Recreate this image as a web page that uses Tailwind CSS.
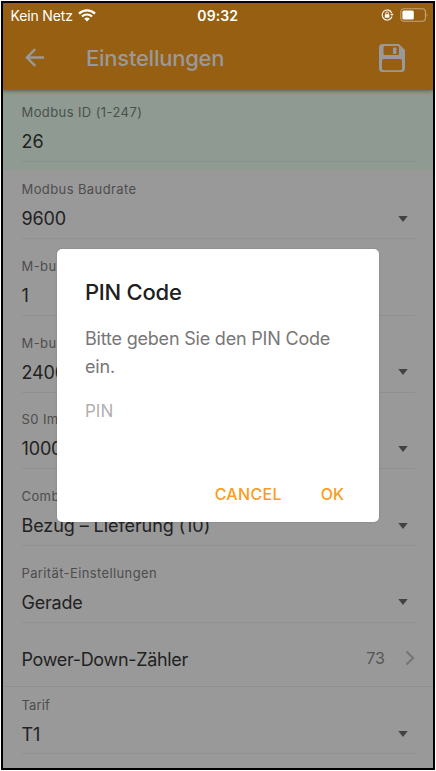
<!DOCTYPE html>
<html lang="de">
<head>
<meta charset="utf-8">
<title>Einstellungen</title>
<script src="https://cdn.jsdelivr.net/npm/@tailwindcss/browser@4"></script>
</head>
<body class="bg-white font-['Inter','Liberation_Sans',sans-serif]">
<div class="relative w-[436px] h-[771px] overflow-hidden bg-white p-px">
<main class="w-[434px] h-[769px] border-2 border-black bg-[#999] overflow-hidden flex flex-col text-[#222]">

  <header class="relative z-10 h-[87px] shrink-0 bg-[#965f12] shadow-[0_1px_4px_rgba(0,0,0,0.4)]">
    <div class="grid grid-cols-3 items-center h-[24px] pl-[7.5px] pr-[5px] text-[14px] text-white">
      <div class="flex items-center gap-[5px]"><span class="tracking-[-0.15px] whitespace-nowrap">Kein Netz</span>
        <svg width="18" height="13" viewBox="0 0 18 13" fill="none" stroke="#fff"><path d="M1 4.6a11.5 11.5 0 0 1 16 0" stroke-width="2.3"/><path d="M3.9 7.6a7.3 7.3 0 0 1 10.2 0" stroke-width="2.1"/><path d="M9 12.5 6.2 9.8a4 4 0 0 1 5.6 0Z" fill="#fff" stroke="none"/></svg>
      </div>
      <div class="text-center font-semibold tracking-[0.1px] pr-[3px]">09:32</div>
      <div class="flex items-center justify-end gap-[6px]">
        <svg width="13" height="12" viewBox="0 0 13 12" fill="none" stroke="#fff"><path d="M10.8 4A5 5 0 1 0 11 7.5" stroke-width="1.1"/><path d="M9.2 4.8h3.4L11 7Z" fill="#fff" stroke="none"/><rect x="3.8" y="5.3" width="4.6" height="3.5" rx=".5" fill="#fff" stroke="none"/><path d="M4.8 5.5V4.2a1.3 1.3 0 0 1 2.6 0v1.3" stroke-width=".9"/></svg>
        <svg class="-mr-px -mt-px" width="29" height="14" viewBox="0 0 29 14"><rect x=".8" y=".8" width="24.6" height="12.400" rx="3.200" fill="none" stroke="#c6a577" stroke-width="1.1"/><rect x="2.400" y="2.500" width="11.400" height="9" rx="1.500" fill="#fff"/><path d="M26.700 5q1.800 2 0 4Z" fill="#c6a577"/></svg>
      </div>
    </div>
    <div class="flex items-center h-[62px] pl-[22px] pr-[28px] text-[#999]">
      <svg width="20" height="20" viewBox="0 0 20 20" fill="none" stroke="currentColor" stroke-width="2.4"><path d="M19 9.500H2M10.200 1.200 1.900 9.500l8.300 8.300"/></svg>
      <h1 class="ml-[41px] text-[22px] font-medium tracking-[-0.25px] leading-[30px]">Einstellungen</h1>
      <svg class="ml-auto" width="26" height="28" viewBox="0 0 26 28"><path fill="currentColor" fill-rule="evenodd" d="M3.500 0H20l6 6v18.500a3.500 3.500 0 0 1-3.500 3.500h-19A3.500 3.500 0 0 1 0 24.500V3.500A3.500 3.500 0 0 1 3.500 0ZM6 2Q4.500 2 4.500 3.500V9.500Q4.500 11 6 11H18.500Q20 11 20 9.500V3.500Q20 2 18.500 2ZM5 15Q3 15 3 17V24.500Q3 26.300 5 26.300H21Q23 26.300 23 24.500V17Q23 15 21 15Z"/><rect x="14" y="3.500" width="3.400" height="6.500" rx=".6" fill="currentColor"/></svg>
    </div>
  </header>

  <section class="h-[80px] shrink-0 bg-[#8f9b92] pl-[18.5px] pr-[18px] pt-[12px]">
    <div class="h-[20px] leading-[20px] text-[13px] tracking-[0.4px] text-[#4b504c]">Modbus ID (1-247)</div>
    <div class="h-[40px] leading-[39px] text-[18px] border-b border-[#879189]">26</div>
  </section>

  <section class="h-[76.75px] shrink-0 pl-[18.5px] pr-[18px] pt-[9px]">
    <div class="h-[20px] leading-[20px] text-[13px] tracking-[0.4px] text-[#4d4d4d]">Modbus Baudrate</div>
    <div class="flex items-center justify-between h-[40px] text-[18px] tracking-[-0.15px] border-b border-[#909090] pr-[7px]"><span>9600</span><svg width="10" height="6" viewBox="0 0 10 6" fill="#424242"><path d="M.3 0h9.400L5 6Z"/></svg></div>
  </section>
  <section class="h-[76.75px] shrink-0 pl-[18.5px] pr-[18px] pt-[9px]">
    <div class="h-[20px] leading-[20px] text-[13px] tracking-[0.45px] text-[#4d4d4d]">M-bus ID</div>
    <div class="flex items-center h-[40px] text-[18px] border-b border-[#909090]">1</div>
  </section>
  <section class="h-[76.75px] shrink-0 pl-[18.5px] pr-[18px] pt-[9px]">
    <div class="h-[20px] leading-[20px] text-[13px] tracking-[0.45px] text-[#4d4d4d]">M-bus</div>
    <div class="flex items-center justify-between h-[40px] text-[18px] tracking-[-0.15px] border-b border-[#909090] pr-[7px]"><span>2400</span><svg width="10" height="6" viewBox="0 0 10 6" fill="#424242"><path d="M.3 0h9.400L5 6Z"/></svg></div>
  </section>
  <section class="h-[76.75px] shrink-0 pl-[18.5px] pr-[18px] pt-[9px]">
    <div class="h-[20px] leading-[20px] text-[13px] tracking-[0.4px] text-[#4d4d4d]">S0 Impuls</div>
    <div class="flex items-center justify-between h-[40px] text-[18px] tracking-[-0.15px] border-b border-[#909090] pr-[7px]"><span>1000</span><svg width="10" height="6" viewBox="0 0 10 6" fill="#424242"><path d="M.3 0h9.400L5 6Z"/></svg></div>
  </section>
  <section class="h-[76.75px] shrink-0 pl-[18.5px] pr-[18px] pt-[9px]">
    <div class="h-[20px] leading-[20px] text-[13px] tracking-[0.4px] text-[#4d4d4d]">Combi</div>
    <div class="flex items-center justify-between h-[40px] text-[18px] border-b border-[#909090] pr-[7px]"><span class="tracking-[-0.08px]">Bezug – Lieferung (10)</span><svg width="10" height="6" viewBox="0 0 10 6" fill="#424242"><path d="M.3 0h9.400L5 6Z"/></svg></div>
  </section>
  <section class="h-[76.75px] shrink-0 pl-[18.5px] pr-[18px] pt-[9px]">
    <div class="h-[20px] leading-[20px] text-[13px] tracking-[0.38px] text-[#4d4d4d]">Parität-Einstellungen</div>
    <div class="flex items-center justify-between h-[40px] text-[18px] tracking-[-0.2px] border-b border-[#909090] pr-[7px]"><span>Gerade</span><svg width="10" height="6" viewBox="0 0 10 6" fill="#424242"><path d="M.3 0h9.400L5 6Z"/></svg></div>
  </section>

  <section class="flex items-center h-[56.5px] shrink-0 pl-[18.5px] pr-[18px] text-[18px] border-b border-[#8f8f8f]">
    <span class="tracking-[-0.32px] pt-[2px]">Power-Down-Zähler</span>
    <span class="ml-auto text-[16px] text-[#555]">73</span>
    <svg class="ml-[20px]" width="10" height="16" viewBox="0 0 10 16" fill="none" stroke="#777" stroke-width="2.300"><path d="m1.500 1.500 6.500 6.500-6.500 6.500"/></svg>
  </section>
  <section class="shrink-0 pl-[18.5px] pr-[18px] pt-[8px]">
    <div class="h-[20px] leading-[20px] text-[13px] tracking-[0.1px] text-[#4d4d4d]">Tarif</div>
    <div class="flex items-center justify-between h-[39px] text-[18px] border-b border-[#909090] pr-[7px]"><span>T1</span><svg width="10" height="6" viewBox="0 0 10 6" fill="#424242"><path d="M.3 0h9.400L5 6Z"/></svg></div>
  </section>
</main>

<div role="dialog" class="absolute z-20 left-[57px] top-[249px] w-[322px] h-[273px] rounded-[5px] bg-white shadow-[0_0_2px_rgba(0,0,0,0.2)] px-[28px] pt-[28px] flex flex-col">
  <h2 class="text-[22px] leading-[30px] font-medium tracking-[-0.25px] text-[#202020]">PIN Code</h2>
  <p class="mt-[18px] text-[18px] leading-[28px] tracking-[-0.2px] text-[#777] whitespace-nowrap">Bitte geben Sie den PIN Code<br>ein.</p>
  <div class="mt-[17px] text-[17px] leading-[26px] text-[#b0b0b0]">PIN</div>
  <div class="mt-auto mb-[16px] flex justify-end gap-[39px] pr-[7px] text-[16px] leading-[24px] font-medium text-[#f89d20]"><span class="tracking-[0.3px]">CANCEL</span><span>OK</span></div>
</div>
</div>
</body>
</html>
